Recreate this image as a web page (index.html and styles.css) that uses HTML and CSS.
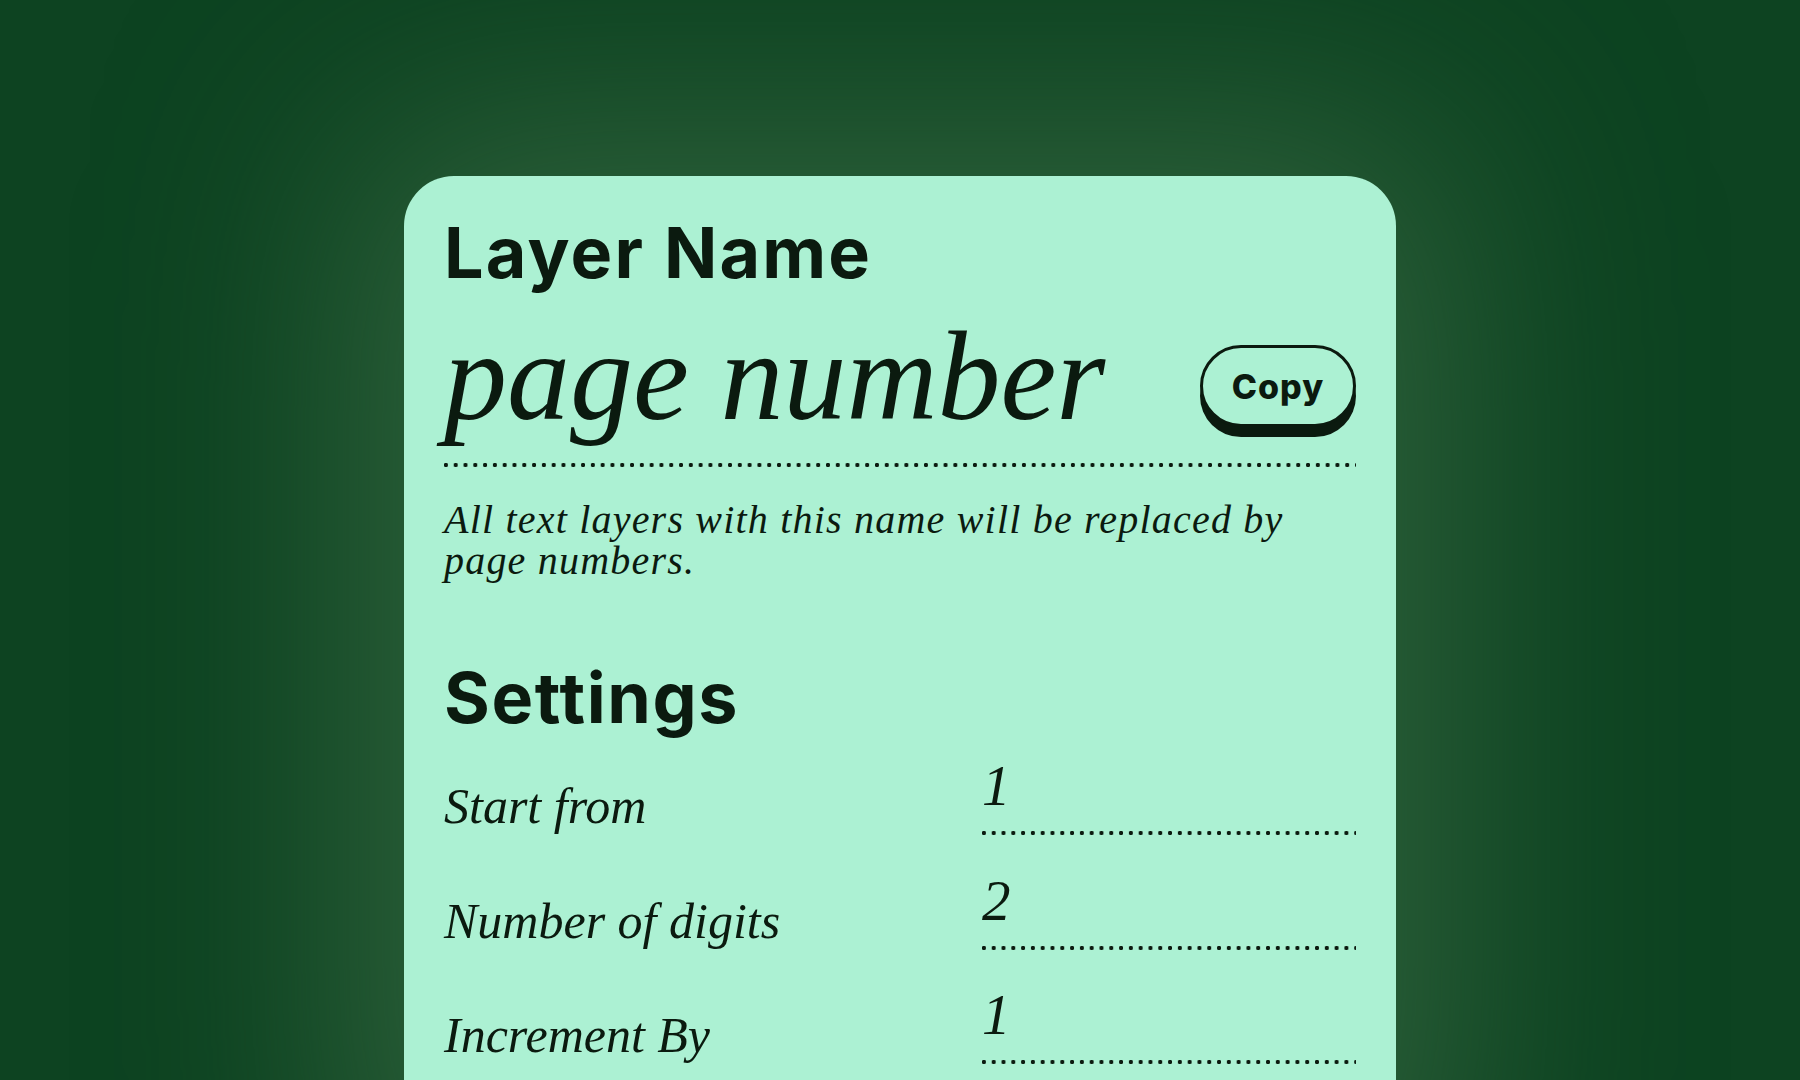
FILE: index.html
```html
<!DOCTYPE html>
<html lang="en">
<head>
<meta charset="utf-8">
<title>Page Numbers</title>
<link rel="stylesheet" href="styles.css">
</head>
<body>
  <main class="card">
    <h1 class="heading heading-layer">Layer Name</h1>
    <div class="name-row dotted">
      <span class="layer-name">page number</span>
      <button class="copy-btn" type="button">Copy</button>
    </div>
    <p class="hint">All text layers with this name will be replaced by page numbers.</p>

    <h2 class="heading settings-title">Settings</h2>
    <div class="settings">
      <div class="setting-row">
        <span class="setting-label">Start from</span>
        <span class="setting-input dotted">1</span>
      </div>
      <div class="setting-row">
        <span class="setting-label">Number of digits</span>
        <span class="setting-input dotted">2</span>
      </div>
      <div class="setting-row">
        <span class="setting-label">Increment By</span>
        <span class="setting-input dotted">1</span>
      </div>
    </div>
  </main>
</body>
</html>
```

FILE: styles.css
```css
* {
  box-sizing: border-box;
}

html,
body {
  margin: 0;
  height: 100%;
}

body {
  background: #0d4321;
  overflow: hidden;
  display: flex;
  justify-content: center;
  align-items: flex-start;
  padding-top: 176px;
  color: #0b1a0f;
}

.card {
  width: 992px;
  background: #acf1d3;
  border-radius: 50px;
  padding: 42px 40px 140px;
  box-shadow: 0 0 230px 60px rgba(52, 102, 64, 0.85);
}

.heading {
  margin: 0;
  font-family: "Inter", "Open Sans", sans-serif;
  font-weight: 700;
  font-size: 70px;
  line-height: 70px;
  letter-spacing: 1.6px;
}

.heading-layer {
  letter-spacing: 2.2px;
}

.dotted {
  background-image: radial-gradient(circle at center, #0b1a0f 0 1.9px, transparent 2.4px);
  background-size: 9.8px 4px;
  background-repeat: repeat-x;
  background-position: -3px 100%;
}

.name-row {
  margin-top: 26px;
  display: flex;
  justify-content: space-between;
  align-items: flex-start;
  padding-bottom: 27px;
}

.layer-name {
  font-family: "Liberation Serif", "Times New Roman", serif;
  font-style: italic;
  font-size: 126px;
  line-height: 126px;
}

.copy-btn {
  margin-top: 31px;
  width: 156px;
  height: 82px;
  border: 3px solid #0b1a0f;
  border-radius: 999px;
  background: #acf1d3;
  box-shadow: 0 10px 0 #0b1a0f;
  font-family: "Inter", "Open Sans", sans-serif;
  font-weight: 800;
  font-size: 34px;
  letter-spacing: 1px;
  color: #0b1a0f;
  padding: 0;
}

.hint {
  margin: 32px 0 0;
  font-family: "Liberation Serif", "Times New Roman", serif;
  font-style: italic;
  font-size: 40px;
  line-height: 41px;
  letter-spacing: 1.2px;
}

.settings-title {
  margin-top: 82px;
}

.settings {
  margin-top: 24px;
  display: flex;
  flex-direction: column;
  gap: 36.5px;
}

.setting-row {
  display: grid;
  grid-template-columns: 1fr 374px;
  align-items: end;
}

.setting-label {
  font-family: "Liberation Serif", "Times New Roman", serif;
  font-style: italic;
  font-size: 50px;
  line-height: 50px;
  padding-bottom: 4px;
}

.setting-input {
  display: block;
  font-family: "Liberation Serif", "Times New Roman", serif;
  font-style: italic;
  font-size: 57px;
  line-height: 57px;
  padding-bottom: 21px;
}
```
